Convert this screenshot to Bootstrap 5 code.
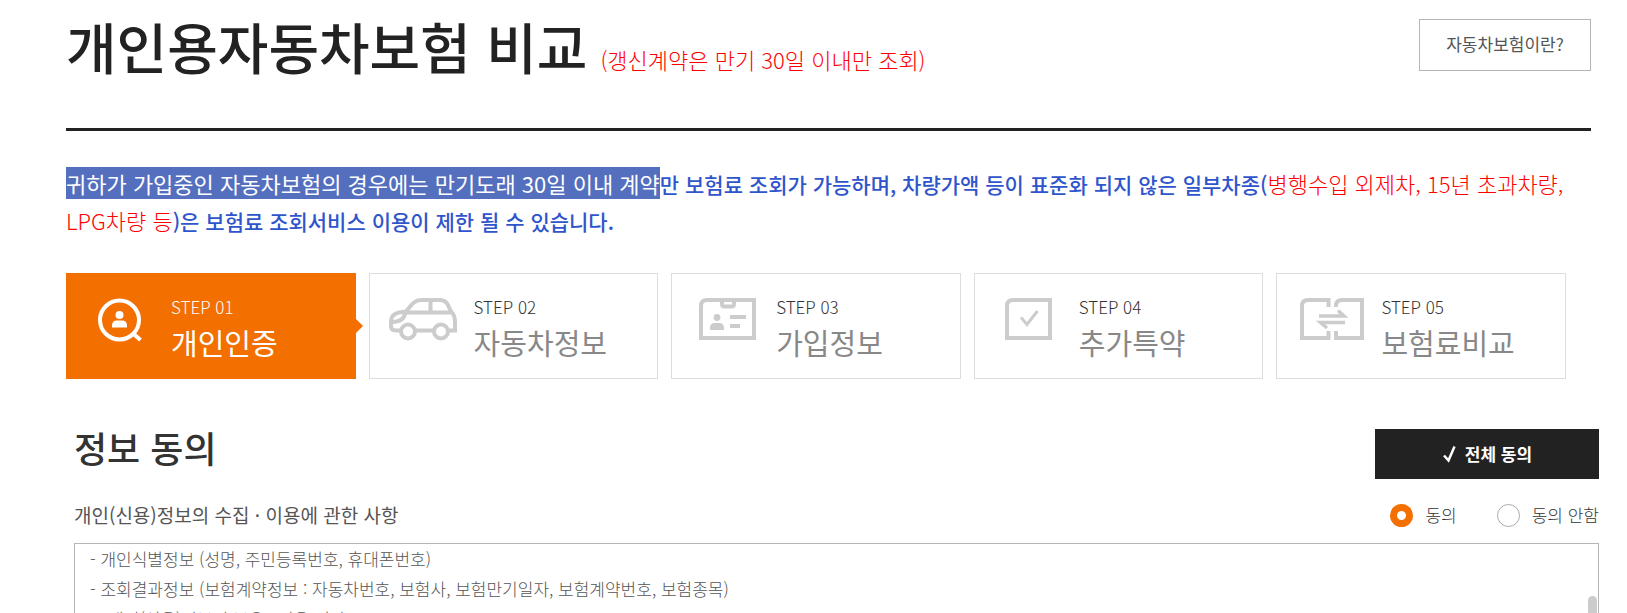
<!DOCTYPE html>
<html lang="ko">
<head>
<meta charset="utf-8">
<meta name="viewport" content="width=device-width, initial-scale=1">
<title>개인용자동차보험 비교</title>
<link href="https://cdn.jsdelivr.net/npm/bootstrap@5.3.0/dist/css/bootstrap.min.css" rel="stylesheet">
<style>
  body { font-family: "Noto Sans CJK KR", sans-serif; color: #222; background: #fff; word-break: keep-all; }
  .page-top { padding: 0 36px 0 66px; }
  .page-head { height: 131px; border-bottom: 3px solid #222; }
  .page-head h1 { font-size: 55px; line-height: 90px; font-weight: 500; }
  .page-head .renewal { font-size: 22px; font-weight: 300; color: #f00; margin-left: 13px; }
  .btn-about { margin-top: 19px; width: 172px; height: 52px; border: 1px solid #b5b5b5; border-radius: 0; color: #555; font-size: 17px; padding: 0 0 2px; }
  .notice { margin: 34px 0 0; font-size: 21px; line-height: 36px; font-weight: 500; color: #2f55cc; }
  .notice .picked { background: #556fbf; color: #fff; font-size: 22px; font-weight: 400; }
  .notice .excluded { color: #f00; font-size: 22px; font-weight: 300; }
  .steps { display: grid; grid-template-columns: repeat(5, 1fr); gap: 13px; margin: 34px 25px 0 0; }
  .step { height: 106px; border: 1px solid #ddd; color: #888; text-decoration: none; }
  .step svg { width: 104px; height: 104px; flex: none; fill: none; stroke: #ccc; stroke-width: 4; }
  .step .solid { fill: #ccc; stroke: none; }
  .step-no { font-size: 17px; line-height: 24px; font-weight: 300; color: #333; padding-top: 21px; }
  .step-name { font-size: 29px; line-height: 46px; font-weight: 400; }
  .step.current { background: #f36f00; border-color: #f36f00; color: #fff; }
  .step.current svg { stroke: #fff; }
  .step.current .solid { fill: #fff; }
  .step.current .step-no { color: #fff; }
  .step.current::after { content: ""; position: absolute; left: 100%; top: 50%; margin-top: -8px; border: 8px solid transparent; border-left-color: #f36f00; border-right: 0; }
  .consent { padding: 50px 28px 0 74px; }
  .consent h2 { font-size: 36px; line-height: 36px; font-weight: 500; color: #333; }
  .btn-all { width: 224px; height: 50px; background: #222; color: #fff; border: 0; border-radius: 0; font-size: 17px; font-weight: 700; }
  .btn-all:hover { background: #333; color: #fff; }
  .agree-row { height: 64px; padding-top: 8px; color: #555; }
  .agree-row h3 { font-size: 19px; font-weight: 400; }
  .agree-row label { font-size: 17px; font-weight: 300; color: #333; }
  .agree-row .choices { gap: 40px; }
  .agree-row .choice { gap: 12px; }
  .agree-row .form-check-input { width: 23px; height: 23px; border: 1px solid #aaa; box-shadow: none; }
  .agree-row .form-check-input:checked { border: 7px solid #f36f00; background: #fff; }
  .terms { border: 1px solid #b5b5b5; border-bottom: 0; padding: 0 15px; font-size: 17px; line-height: 30px; font-weight: 300; color: #555; }
  .terms .thumb { width: 9px; height: 90px; top: 52px; right: 1px; border-radius: 5px; background: #ccc; }
</style>
</head>
<body>
<main class="vh-100 d-flex flex-column overflow-hidden">
  <div class="page-top">
    <header class="page-head d-flex justify-content-between align-items-start">
      <h1 class="m-0">개인용자동차보험 비교<span class="renewal">(갱신계약은 만기 30일 이내만 조회)</span></h1>
      <button type="button" class="btn btn-about">자동차보험이란?</button>
    </header>
    <p class="notice"><span class="picked">귀하가 가입중인 자동차보험의 경우에는 만기도래 30일 이내 계약</span>만 보험료 조회가 가능하며, 차량가액 등이 표준화 되지 않은 일부차종(<span class="excluded">병행수입 외제차, 15년 초과차량, LPG차량 등</span>)은 보험료 조회서비스 이용이 제한 될 수 있습니다.</p>
    <nav class="steps" aria-label="진행 단계">
      <a href="#" class="step current d-flex position-relative" aria-current="step">
        <svg viewBox="1 1 104 104" aria-hidden="true"><circle cx="53.500" cy="47" r="19.500"/><path d="M66 59.500l8.500 7.500"/><circle class="solid" cx="53.500" cy="42" r="4"/><path class="solid" d="M46 54.500v-2q0-5 5-5h5q5 0 5 5v2z"/></svg>
        <div><div class="step-no">STEP 01</div><div class="step-name">개인인증</div></div>
      </a>
      <a href="#" class="step d-flex">
        <svg viewBox="1 1 104 104" aria-hidden="true"><path d="M31 57.500H27Q22 57.500 22 53V48Q22 41.500 30 39.500L37 38.500C43 31 46 27 52 27H71Q76.500 27 79 32L82 38.500Q86 42 86 49V57.500H80M47 57.500H64M35 39.500H82M61.500 27V39M36 40Q35 49 23 49"/><circle cx="39" cy="58.500" r="7"/><circle cx="72" cy="58.500" r="7"/></svg>
        <div><div class="step-no">STEP 02</div><div class="step-name">자동차정보</div></div>
      </a>
      <a href="#" class="step d-flex">
        <svg viewBox="1 1 104 104" aria-hidden="true"><path d="M30 65V33Q30 27 36 27H83V65ZM51 27V31Q51 33.500 53.500 33.500H60.500Q63 33.500 63 31V27M59 44H75M59 53H69"/><circle class="solid" cx="46" cy="44.500" r="3.400"/><path class="solid" d="M39 57v-2q0-5 5-5h4q5 0 5 5v2z"/></svg>
        <div><div class="step-no">STEP 03</div><div class="step-name">가입정보</div></div>
      </a>
      <a href="#" class="step d-flex">
        <svg viewBox="1 1 104 104" aria-hidden="true"><path d="M33 65V33Q33 27 39 27H76V65Z"/><path stroke-width="3" d="M47 44.500L53 51.500L63.500 38"/></svg>
        <div><div class="step-no">STEP 04</div><div class="step-name">추가특약</div></div>
      </a>
      <a href="#" class="step d-flex">
        <svg viewBox="1 1 104 104" aria-hidden="true"><path d="M52.500 34V27H32Q26 27 26 33V65H52.500V58M60 34V33Q60 27 66 27H86V65H60V58"/><path stroke-width="3.500" d="M43 43H68L62 37.500M69 49.500H44.500L51 55"/></svg>
        <div><div class="step-no">STEP 05</div><div class="step-name">보험료비교</div></div>
      </a>
    </nav>
  </div>

  <section class="consent d-flex flex-column flex-grow-1">
    <div class="d-flex justify-content-between align-items-start">
      <h2 class="m-0">정보 동의</h2>
      <button type="button" class="btn btn-all d-flex align-items-center justify-content-center gap-2">
        <svg width="15" height="18" viewBox="0 0 15 18" fill="none" stroke="#fff" stroke-width="2.500" aria-hidden="true"><path d="M2 10.500L6.500 15.500L12.500 1.500"/></svg>전체 동의
      </button>
    </div>
    <div class="agree-row d-flex justify-content-between align-items-center">
      <h3 class="m-0">개인(신용)정보의 수집 · 이용에 관한 사항</h3>
      <div class="choices d-flex">
        <div class="choice d-flex align-items-center"><input class="form-check-input m-0" type="radio" name="agree" id="agreeYes" checked><label for="agreeYes">동의</label></div>
        <div class="choice d-flex align-items-center"><input class="form-check-input m-0" type="radio" name="agree" id="agreeNo"><label for="agreeNo">동의 안함</label></div>
      </div>
    </div>
    <div class="terms flex-grow-1 position-relative overflow-hidden">
      <div>- 개인식별정보 (성명, 주민등록번호, 휴대폰번호)</div>
      <div>- 조회결과정보 (보험계약정보 : 자동차번호, 보험사, 보험만기일자, 보험계약번호, 보험종목)</div>
      <div>2. 개인(신용)정보의 보유 · 이용 기간</div>
      <div class="thumb position-absolute"></div>
    </div>
  </section>
</main>
<script src="https://cdn.jsdelivr.net/npm/bootstrap@5.3.0/dist/js/bootstrap.bundle.min.js"></script>
</body>
</html>
